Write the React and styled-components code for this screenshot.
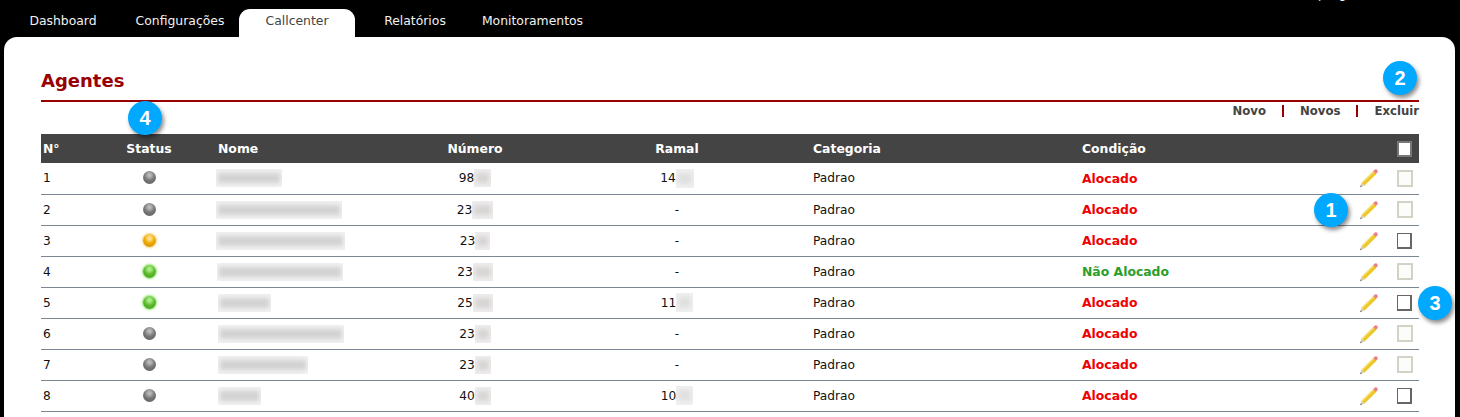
import React from 'react'
import styled, { createGlobalStyle } from 'styled-components'

const GlobalStyle = createGlobalStyle`
  html, body {
    margin: 0;
    height: 100%;
    background: #000;
    overflow: hidden;
  }
  body {
    font-family: "DejaVu Sans", Verdana, sans-serif;
    font-size: 12px;
    color: #111;
  }
`

const Page = styled.div`
  position: relative;
  width: 1460px;
  height: 417px;
  display: flex;
  flex-direction: column;
  overflow: hidden;
  background: #000;
`

const Nav = styled.nav`
  display: flex;
  align-items: flex-end;
  height: 37px;
  padding-left: 5px;
  flex-shrink: 0;
`

// only the descenders of this line are still on screen in the picture
const UserInfo = styled.span`
  position: absolute;
  left: 1318px;
  top: -13px;
  font-size: 12px;
  line-height: 14px;
  letter-spacing: 3px;
  color: #f2f2f2;
`

const Tab = styled.a`
  width: ${(p) => p.$width}px;
  height: 28px;
  display: flex;
  align-items: center;
  justify-content: center;
  padding-bottom: 5px;
  box-sizing: border-box;
  font-size: 12.4px;
  color: ${(p) => (p.$active ? '#444' : '#f2f2f2')};
  background: ${(p) => (p.$active ? '#fff' : 'transparent')};
  border-radius: 11px 11px 0 0;
`

const Panel = styled.main`
  flex: 1;
  margin: 0 5px 0 4px;
  padding: 29px 36px 0 37px;
  background: #fff;
  border-radius: 13px 13px 0 0;
`

const Title = styled.h1`
  margin: 0;
  height: 36px;
  box-sizing: border-box;
  padding-top: 3px;
  border-bottom: 2px solid #990000;
  font-size: 18px;
  line-height: 24px;
  font-weight: 700;
  color: #990000;
`

const Actions = styled.div`
  display: flex;
  justify-content: flex-end;
  align-items: center;
  gap: 16px;
  height: 32px;
  padding-bottom: 14px;
  box-sizing: border-box;
`

const ActionLink = styled.a`
  font-size: 11.7px;
  font-weight: 700;
  color: #444;
`

const Separator = styled.span`
  width: 2px;
  height: 12px;
  background: #990000;
`

const Table = styled.table`
  width: 1378px;
  table-layout: fixed;
  border-collapse: collapse;
`

const HeadCell = styled.th`
  height: 29px;
  padding: 0 2px;
  background: #444;
  color: #fff;
  font-size: 12.4px;
  font-weight: 700;
  text-align: ${(p) => p.$align || 'left'};
`

const Row = styled.tr`
  height: 31px;
  border-bottom: 1px solid #7b8794;
`

const Cell = styled.td`
  padding: 0 2px;
  font-size: 12.2px;
  color: #111;
  text-align: ${(p) => p.$align || 'left'};
  vertical-align: middle;
`

const NameCell = styled(Cell)`
  padding-left: 0;
`

const Condition = styled.span`
  font-weight: 700;
  font-size: 12.4px;
  color: ${(p) => (p.$free ? '#2a9d2a' : '#f00000')};
`

const CellInner = styled.span`
  display: inline-flex;
  align-items: center;
  vertical-align: middle;
`

const Blur = styled.span`
  display: inline-block;
  width: ${(p) => p.$width}px;
  height: ${(p) => p.$height || 18}px;
  margin-left: ${(p) => p.$offset || 0}px;
  padding: 4px 2px;
  box-sizing: border-box;
  background: ${(p) => p.$tint || '#f1f1f1'};
  overflow: hidden;
  vertical-align: middle;

  &::after {
    content: '';
    display: block;
    height: 100%;
    background: ${(p) => p.$ink || '#d2d2d2'};
    filter: blur(2px);
  }
`

const colors = {
  off: ['#b8b8b8', '#777', '#5a5a5a', 'transparent'],
  busy: ['#ffe08a', '#eba900', '#c98a00', 'rgba(245, 180, 40, 0.55)'],
  on: ['#a8ee88', '#5cb82c', '#3f9a1c', 'rgba(110, 225, 60, 0.7)'],
}

const StatusDot = styled.span`
  display: block;
  width: 13px;
  height: 13px;
  margin: -1px auto 0;
  border-radius: 50%;
  background: radial-gradient(
    circle at 50% 32%,
    ${(p) => colors[p.$state][0]} 0 12%,
    ${(p) => colors[p.$state][1]} 48%,
    ${(p) => colors[p.$state][2]} 100%
  );
  box-shadow: 0 0 2px 1px ${(p) => colors[p.$state][3]};
`

const Check = styled.span`
  display: block;
  width: ${(p) => (p.$disabled ? 16 : 15)}px;
  height: ${(p) => (p.$disabled ? 17 : 16)}px;
  margin: 0 auto;
  box-sizing: border-box;
  background: ${(p) => (p.$disabled ? '#fcfcfa' : '#fff')};
  border-style: solid;
  border-width: ${(p) => (p.$disabled ? '2px' : '1px 2px 2px 1px')};
  border-color: ${(p) => (p.$disabled ? '#d2d2c6' : '#666')};
`

const HeadCheck = styled(Check)`
  border-width: 2px;
  border-color: #777;
  background: #fff;
`

const Badge = styled.span`
  position: absolute;
  left: ${(p) => p.$x - 17}px;
  top: ${(p) => p.$y - 17}px;
  width: 34px;
  height: 34px;
  display: flex;
  align-items: center;
  justify-content: center;
  border-radius: 50%;
  background: #00a8ff;
  color: #fff;
  font-family: "Liberation Sans", Arial, sans-serif;
  font-size: 20px;
  font-weight: 700;
  box-shadow: 2px 3px 4px rgba(0, 0, 0, 0.45);
`

const PencilIcon = styled.svg`
  display: block;
  margin: 0 auto;
  position: relative;
  left: 1px;
`

const Pencil = () => (
  <PencilIcon width="20" height="20" viewBox="0 0 20 20">
    <path d="M1 19.2 L2.6 14.6 L5.6 17.6 Z" fill="#d8cbb0" />
    <path d="M1 19.2 L1.7 17.2 L3 18.5 Z" fill="#777" />
    <path d="M2.6 14.6 L14.6 2.8 L17.6 5.8 L5.6 17.6 Z" fill="#eec72a" />
    <path d="M2.6 14.6 L14.6 2.8 L15.3 3.5 L3.3 15.3 Z" fill="#f8e690" />
    <path d="M14.2 3.2 L15.8 1.6 Q16.8 .8 17.8 1.6 L18.4 2.2 Q19.2 3.2 18.4 4.2 L16.8 5.8 Z" fill="#e97f8b" />
  </PencilIcon>
)

const agents = [
  { n: 1, state: 'off', name: 66, num: '98', numBlur: 17, ramal: '14', ramalBlur: 18, disabled: true },
  { n: 2, state: 'off', name: 126, num: '23', numBlur: 21, disabled: true },
  { n: 3, state: 'busy', name: 129, num: '23', numBlur: 15 },
  { n: 4, state: 'on', name: 126, num: '23', numBlur: 20, free: true, disabled: true, shift: 1 },
  { n: 5, state: 'on', name: 53, num: '25', numBlur: 20, ramal: '11', ramalBlur: 17, shift: 2 },
  { n: 6, state: 'off', name: 126, num: '23', numBlur: 16, disabled: true, shift: 2 },
  { n: 7, state: 'off', name: 90, num: '23', numBlur: 16, disabled: true, shift: 2 },
  { n: 8, state: 'off', name: 43, num: '40', numBlur: 16, ramal: '10', ramalBlur: 17, shift: 2 },
]

const App = () => {
  return (
    <Page>
      <GlobalStyle />
      <UserInfo>página</UserInfo>
      <Nav>
        <Tab $width={116}>Dashboard</Tab>
        <Tab $width={118}>Configurações</Tab>
        <Tab $width={116} $active>Callcenter</Tab>
        <Tab $width={120}>Relatórios</Tab>
        <Tab $width={115}>Monitoramentos</Tab>
      </Nav>
      <Panel>
        <Title>Agentes</Title>
        <Actions>
          <ActionLink>Novo</ActionLink>
          <Separator />
          <ActionLink>Novos</ActionLink>
          <Separator />
          <ActionLink>Excluir</ActionLink>
        </Actions>
        <Table>
          <colgroup>
            <col width="41" />
            <col width="134" />
            <col width="191" />
            <col width="136" />
            <col width="268" />
            <col width="269" />
            <col width="266" />
            <col width="44" />
            <col width="29" />
          </colgroup>
          <thead>
            <tr>
              <HeadCell>N°</HeadCell>
              <HeadCell $align="center">Status</HeadCell>
              <HeadCell>Nome</HeadCell>
              <HeadCell $align="center">Número</HeadCell>
              <HeadCell $align="center">Ramal</HeadCell>
              <HeadCell>Categoria</HeadCell>
              <HeadCell>Condição</HeadCell>
              <HeadCell />
              <HeadCell><HeadCheck /></HeadCell>
            </tr>
          </thead>
          <tbody>
            {agents.map((a) => (
              <Row key={a.n}>
                <Cell>{a.n}</Cell>
                <Cell><StatusDot $state={a.state} /></Cell>
                <NameCell>
                  <Blur $width={a.name} $offset={a.shift || 0} />
                </NameCell>
                <Cell $align="center">
                  <CellInner>{a.num}<Blur $width={a.numBlur} $tint="#eeecec" $ink="#d8d5d5" /></CellInner>
                </Cell>
                <Cell $align="center">
                  {a.ramal ? (
                    <CellInner>{a.ramal}<Blur $width={a.ramalBlur} $height={19} $tint="#f0f0f0" $ink="#e0e0e0" /></CellInner>
                  ) : '-'}
                </Cell>
                <Cell>Padrao</Cell>
                <Cell><Condition $free={a.free}>{a.free ? 'Não Alocado' : 'Alocado'}</Condition></Cell>
                <Cell><Pencil /></Cell>
                <Cell><Check $disabled={a.disabled} /></Cell>
              </Row>
            ))}
          </tbody>
        </Table>
      </Panel>
      <Badge $x={1331} $y={210}>1</Badge>
      <Badge $x={1400} $y={78}>2</Badge>
      <Badge $x={1435} $y={303}>3</Badge>
      <Badge $x={145} $y={118}>4</Badge>
    </Page>
  )
}

export default App
